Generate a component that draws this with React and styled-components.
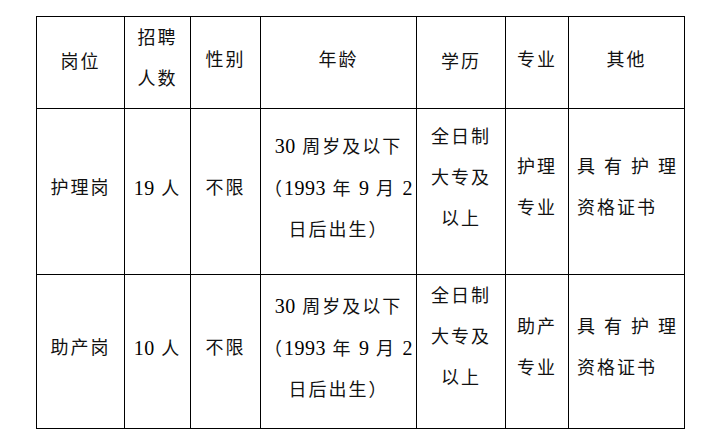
import React from 'react';
import styled, { createGlobalStyle } from 'styled-components';

const GlobalStyle = createGlobalStyle`
  html, body {
    margin: 0;
    padding: 0;
    background: #fff;
  }
  body {
    font-family: "Liberation Serif", "Noto Sans CJK SC", serif;
    color: #111;
  }
`;

const Page = styled.div`
  width: 726px;
  height: 435px;
  padding: 16px 0 0 36px;
  box-sizing: border-box;
`;

const Table = styled.table`
  border-collapse: collapse;
  table-layout: fixed;
  width: 649px;
`;

const Row = styled.tr`
  height: ${({ $h }) => $h}px;
`;

const Cell = styled.td`
  border: 1.5px solid #000;
  padding: 0 0 ${({ $lift }) => $lift || 0}px ${({ $left }) => ($left ? 8 : 0)}px;
  text-align: ${({ $left }) => ($left ? 'left' : 'center')};
  vertical-align: middle;
  font-family: "Liberation Serif", "Noto Sans CJK SC", serif;
  font-size: 18px;
  line-height: 41px;
  letter-spacing: 2px;
  font-weight: 400;
  color: #111;
  white-space: nowrap;
`;

const Line = styled.div`
  letter-spacing: ${({ $wide }) => ($wide ? '9px' : 'inherit')};
`;

const Num = styled.span`
  font-family: "Liberation Serif", "Times New Roman", serif;
  font-size: 20px;
  letter-spacing: 0.5px;
  color: #000;
`;

const widths = [88, 66, 70, 156, 89, 63, 116];

const rows = [
  { post: '护理岗', count: '19', major: ['护理', '专业'], h: 166, edu: 26 },
  { post: '助产岗', count: '10', major: ['助产', '专业'], h: 154, edu: 28 },
];

const Lines = ({ items }) => items.map((t, i) => <Line key={i}>{t}</Line>);

export default function App() {
  return (
    <>
      <GlobalStyle />
      <Page>
        <Table>
          <colgroup>
            {widths.map((w, i) => (
              <col key={i} style={{ width: w }} />
            ))}
          </colgroup>
          <tbody>
            <Row $h={92}>
              <Cell>岗位</Cell>
              <Cell $lift={8}>
                <Lines items={['招聘', '人数']} />
              </Cell>
              <Cell $lift={4}>性别</Cell>
              <Cell $lift={4}>年龄</Cell>
              <Cell>学历</Cell>
              <Cell $lift={4}>专业</Cell>
              <Cell $lift={4}>其他</Cell>
            </Row>
            {rows.map((r) => (
              <Row key={r.post} $h={r.h}>
                <Cell $lift={6}>{r.post}</Cell>
                <Cell $lift={6}>
                  <Num>{r.count}</Num> 人
                </Cell>
                <Cell $lift={6}>不限</Cell>
                <Cell $lift={6}>
                  <Line>
                    <Num>30</Num> 周岁及以下
                  </Line>
                  <Line>
                    （<Num>1993</Num> 年 <Num>9</Num> 月 <Num>2</Num>
                  </Line>
                  <Line>日后出生）</Line>
                </Cell>
                <Cell $lift={r.edu}>
                  <Lines items={['全日制', '大专及', '以上']} />
                </Cell>
                <Cell $lift={7}>
                  <Lines items={r.major} />
                </Cell>
                <Cell $left $lift={7}>
                  <Line $wide>具有护理</Line>
                  <Line>资格证书</Line>
                </Cell>
              </Row>
            ))}
          </tbody>
        </Table>
      </Page>
    </>
  );
}
